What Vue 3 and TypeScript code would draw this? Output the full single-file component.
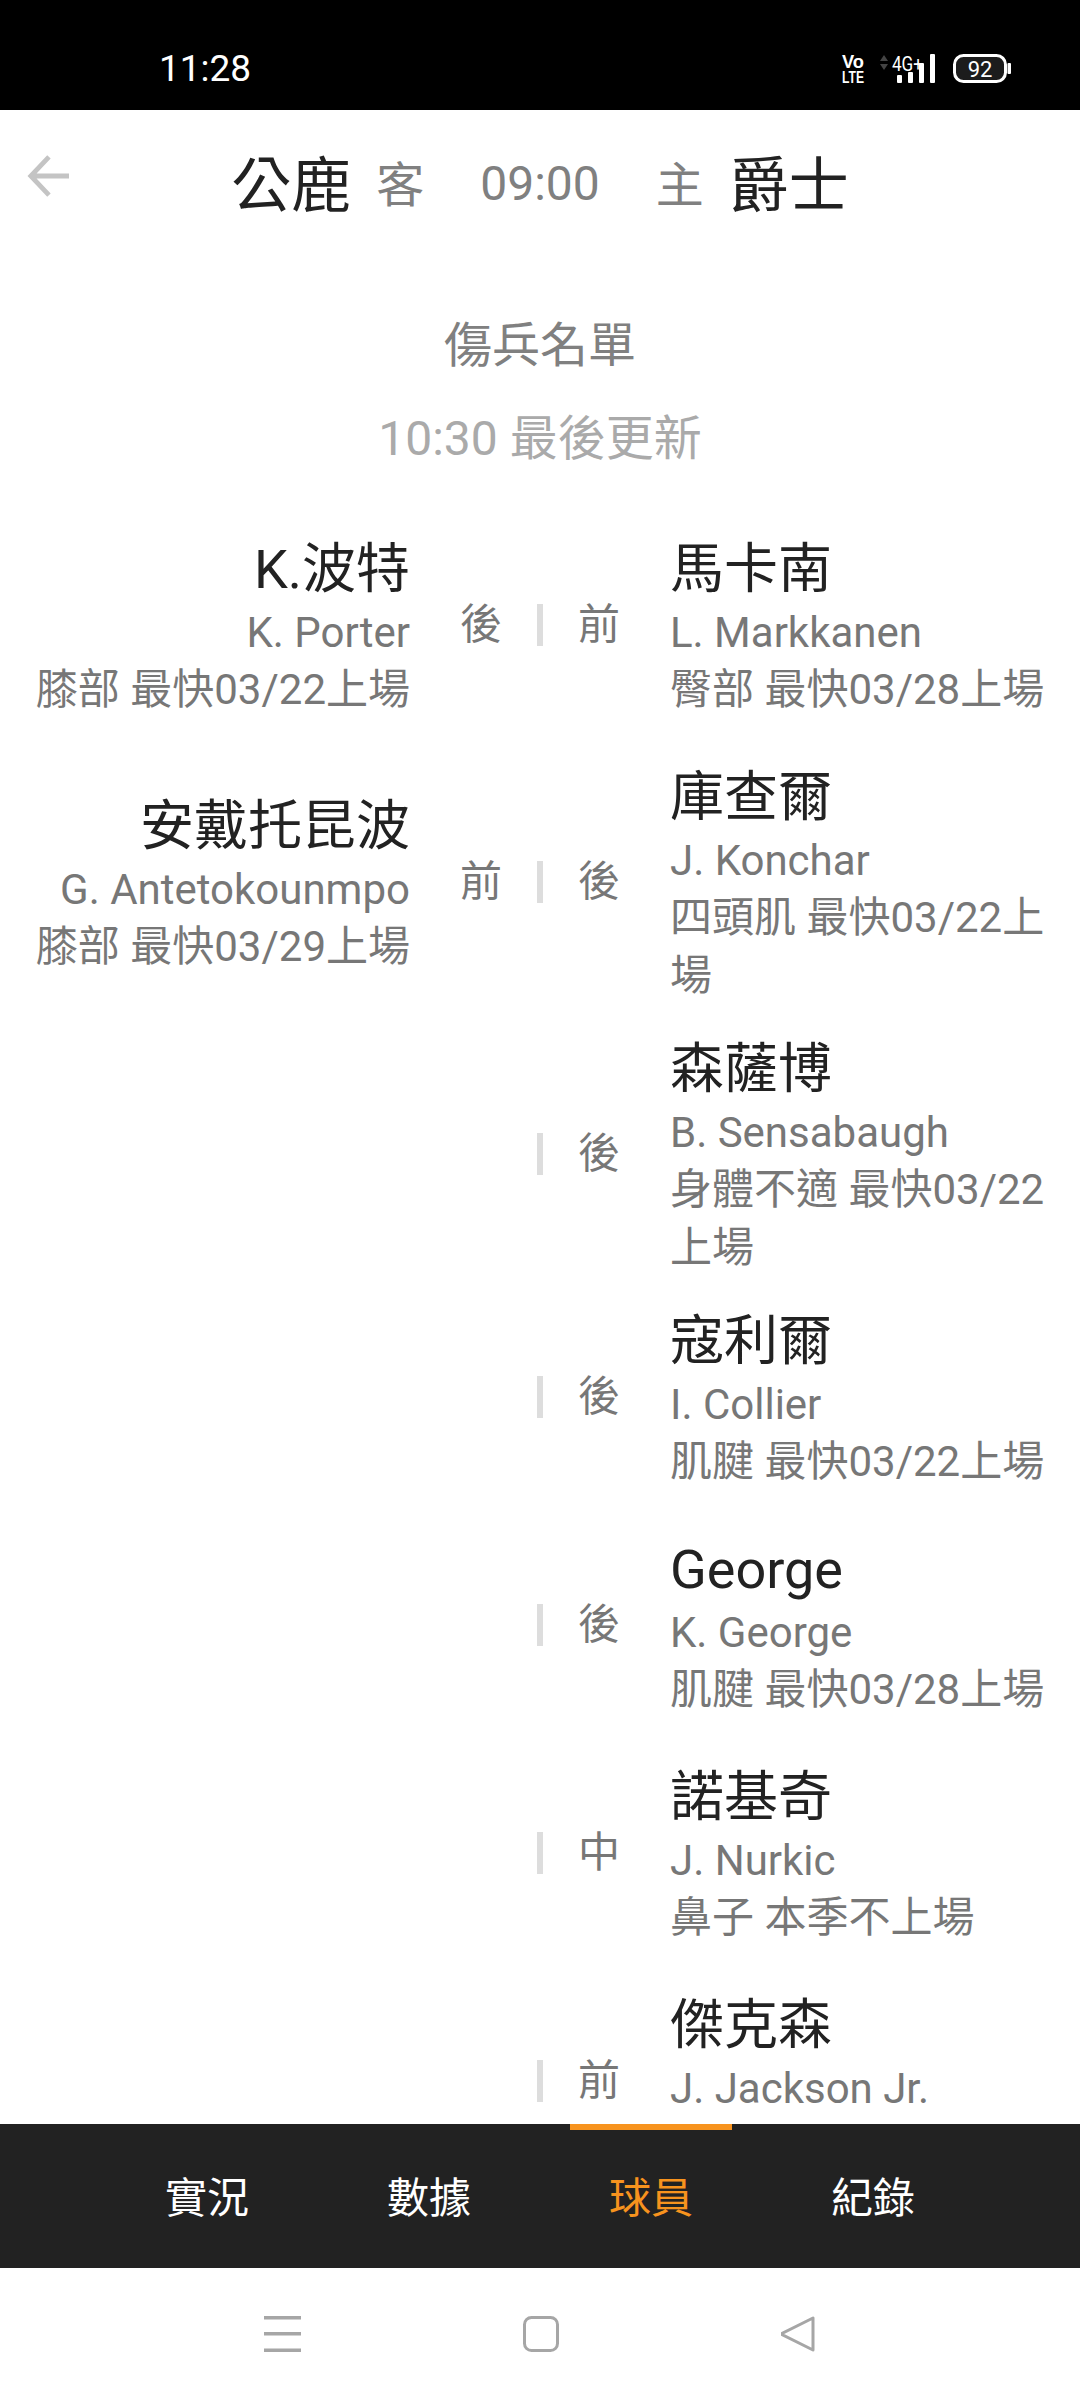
<template>
  <div class="phone">
    <div class="status-bar">
      <span class="clock">11:28</span>
      <svg class="status-icons" width="170" height="32" viewBox="0 0 170 32">
        <text x="1" y="16" class="volte" textLength="22" lengthAdjust="spacingAndGlyphs">Vo</text>
        <text x="1" y="31" class="volte volte--sm" textLength="22" lengthAdjust="spacingAndGlyphs">LTE</text>
        <path d="M39 9l4-6 4 6zM39 12l4 6 4-6z" fill="#444" />
        <text x="51" y="19" class="net" textLength="31" lengthAdjust="spacingAndGlyphs">4G+</text>
        <rect x="56" y="23" width="5" height="8" rx="1" fill="#fff" />
        <rect x="67" y="20" width="5" height="11" rx="1" fill="#fff" />
        <rect x="78" y="11" width="5" height="20" rx="1" fill="#fff" />
        <rect x="89" y="2" width="5" height="29" rx="1" fill="#fff" />
        <rect x="113.5" y="3.5" width="51" height="26" rx="9" fill="#1c1c1c" stroke="#fff" stroke-width="3" />
        <text x="139" y="25" text-anchor="middle" class="batt">92</text>
        <rect x="166.5" y="11" width="3.5" height="11" rx="1" fill="#fff" />
      </svg>
    </div>

    <header class="match-head">
      <svg class="back" width="42" height="42" viewBox="0 0 44 44" fill="none" stroke="#c4c4c4" stroke-width="5">
        <path d="M44 22H5M23 2L4 22l19 20" />
      </svg>
      <span class="team">公鹿</span>
      <span class="side side--away">客</span>
      <span class="time">09:00</span>
      <span class="side side--home">主</span>
      <span class="team">爵士</span>
    </header>

    <main class="content">
      <h2 class="title">傷兵名單</h2>
      <p class="updated">10:30 最後更新</p>

      <div class="rows">
        <div v-for="(row, i) in rows" :key="i" class="row">
          <div class="row-inner">
            <div class="player player--left">
              <template v-if="row.left">
                <div class="name">{{ row.left.name }}</div>
                <div class="en">{{ row.left.en }}</div>
                <div class="detail">{{ row.left.detail }}</div>
              </template>
            </div>
            <div class="positions">
              <span class="pos">{{ row.left?.pos }}</span>
              <i class="bar"></i>
              <span class="pos">{{ row.right.pos }}</span>
            </div>
            <div class="player">
              <div class="name">{{ row.right.name }}</div>
              <div class="en">{{ row.right.en }}</div>
              <div class="detail">{{ row.right.detail || '&nbsp;' }}</div>
            </div>
          </div>
        </div>
      </div>
    </main>

    <nav class="tabs">
      <div v-for="tab in tabs" :key="tab" class="tab" :class="{ active: tab === '球員' }">
        {{ tab }}
      </div>
    </nav>

    <div class="nav-bar">
      <svg width="37" height="36" viewBox="0 0 37 36" fill="#a6a6a6">
        <rect y="0" width="37" height="3.5" />
        <rect y="16" width="37" height="3.5" />
        <rect y="32.5" width="37" height="3.5" />
      </svg>
      <svg width="36" height="36" viewBox="0 0 36 36" fill="none" stroke="#a6a6a6" stroke-width="3">
        <rect x="1.5" y="1.5" width="33" height="33" rx="7" />
      </svg>
      <svg width="36" height="36" viewBox="0 0 36 36" fill="none" stroke="#a6a6a6" stroke-width="3" stroke-linejoin="round">
        <path d="M32 2v32L0 18z" />
      </svg>
    </div>
  </div>
</template>

<script setup lang="ts">
interface Player {
  name: string
  en: string
  detail: string
  pos: string
}

const rows: { left?: Player; right: Player }[] = [
  {
    left: { name: 'K.波特', en: 'K. Porter', detail: '膝部 最快03/22上場', pos: '後' },
    right: { name: '馬卡南', en: 'L. Markkanen', detail: '臀部 最快03/28上場', pos: '前' },
  },
  {
    left: { name: '安戴托昆波', en: 'G. Antetokounmpo', detail: '膝部 最快03/29上場', pos: '前' },
    right: { name: '庫查爾', en: 'J. Konchar', detail: '四頭肌 最快03/22上場', pos: '後' },
  },
  { right: { name: '森薩博', en: 'B. Sensabaugh', detail: '身體不適 最快03/22上場', pos: '後' } },
  { right: { name: '寇利爾', en: 'I. Collier', detail: '肌腱 最快03/22上場', pos: '後' } },
  { right: { name: 'George', en: 'K. George', detail: '肌腱 最快03/28上場', pos: '後' } },
  { right: { name: '諾基奇', en: 'J. Nurkic', detail: '鼻子 本季不上場', pos: '中' } },
  // detail line sits behind the tab bar in the screenshot
  { right: { name: '傑克森', en: 'J. Jackson Jr.', detail: '', pos: '前' } },
]

const tabs = ['實況', '數據', '球員', '紀錄']
</script>

<style>
body {
  margin: 0;
  background: #fff;
}
</style>

<style scoped>
.phone {
  width: 1080px;
  height: 2400px;
  display: flex;
  flex-direction: column;
  overflow: hidden;
  background: #fff;
  font-family: Roboto, "Noto Sans CJK TC", sans-serif;
}

.status-bar {
  height: 110px;
  flex: none;
  display: flex;
  align-items: center;
  justify-content: space-between;
  box-sizing: border-box;
  padding: 26px 69px 0 159px;
  background: #000;
  color: #fff;
}

.clock {
  font-size: 37px;
}

.status-icons {
  display: block;
  overflow: visible;
}

.volte {
  font: 700 18px "Liberation Sans", sans-serif;
  fill: #fff;
}

.volte--sm {
  font-size: 16px;
}

.net {
  font: 400 21px Roboto, sans-serif;
  fill: #fff;
}

.batt {
  font: 400 22px Roboto, sans-serif;
  fill: #fff;
}

.match-head {
  position: relative;
  height: 146px;
  flex: none;
  display: flex;
  align-items: center;
  justify-content: center;
}

.back {
  position: absolute;
  left: 27px;
  top: 45px;
}

.team {
  margin-bottom: 6px;
  font-size: 60px;
  color: #222;
}

.side {
  margin-bottom: 4px;
  font-size: 48px;
  color: #808080;
}

.side--away {
  margin-left: 25px;
  margin-right: 56px;
}

.side--home {
  margin-left: 56px;
  margin-right: 25px;
}

.time {
  font-size: 48px;
  color: #808080;
}

.content {
  flex: 1;
  min-height: 0;
  overflow: hidden;
}

.title {
  margin: 57px 0 0;
  font-size: 48px;
  font-weight: 400;
  line-height: 66px;
  text-align: center;
  color: #808080;
}

.updated {
  margin: 27px 0 0;
  font-size: 48px;
  line-height: 66px;
  text-align: center;
  color: #aaa;
}

.rows {
  margin-top: 63px;
  padding: 0 34px;
}

.row {
  box-sizing: border-box;
  min-height: 228px;
  padding-bottom: 30px;
}

.row-inner {
  display: flex;
  align-items: center;
}

.player {
  width: 376px;
  flex: none;
}

.player--left {
  text-align: right;
}

.name {
  font-size: 54px;
  line-height: 70px;
  color: #222;
}

.en {
  font-size: 42px;
  line-height: 56px;
  color: #777;
}

.detail {
  font-size: 42px;
  line-height: 58px;
  color: #777;
}

.positions {
  width: 260px;
  flex: none;
  display: flex;
  align-items: center;
  justify-content: center;
  gap: 35px;
  margin-bottom: 5px;
}

.pos {
  width: 42px;
  font-size: 42px;
  line-height: 56px;
  text-align: center;
  color: #777;
}

.bar {
  width: 6px;
  height: 42px;
  background: #ddd;
}

.tabs {
  position: relative;
  height: 144px;
  flex: none;
  display: flex;
  justify-content: center;
  background: #222;
}

.tab {
  position: relative;
  box-sizing: border-box;
  width: 222px;
  padding-top: 6px;
  line-height: 138px;
  font-size: 42px;
  text-align: center;
  color: #fff;
}

.tab.active {
  color: #f7931e;
}

.tab.active::before {
  content: "";
  position: absolute;
  top: 0;
  left: 30px;
  width: 162px;
  height: 6px;
  background: #f7931e;
}

.nav-bar {
  height: 132px;
  flex: none;
  display: flex;
  align-items: center;
  justify-content: center;
  gap: 222px;
  background: #fff;
}
</style>
